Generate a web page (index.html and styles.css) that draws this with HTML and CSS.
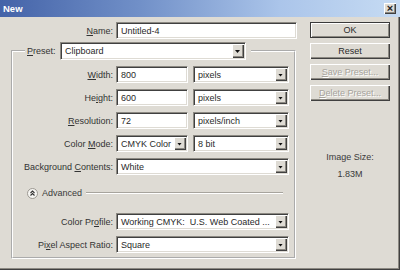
FILE: index.html
```html
<!DOCTYPE html>
<html>
<head>
<meta charset="utf-8">
<title>New</title>
<link rel="stylesheet" href="styles.css">
</head>
<body>
<div class="window">
  <div class="titlebar">
    <span class="title">New</span>
    <span class="close">&#215;</span>
  </div>
  <div class="content">
    <div class="main">
      <div class="row name-row">
        <span class="lbl lbl-name"><u>N</u>ame:</span>
        <div class="field name-field"><span class="val">Untitled-4</span></div>
      </div>
      <fieldset class="group">
        <legend class="legend">
          <span class="legend-lbl"><u>P</u>reset:</span>
          <div class="field select preset"><span class="val">Clipboard</span><span class="arrow"></span></div>
        </legend>
        <div class="row first">
          <span class="lbl"><u>W</u>idth:</span>
          <div class="field num"><span class="val">800</span></div>
          <div class="field select unit"><span class="val">pixels</span><span class="arrow"></span></div>
        </div>
        <div class="row">
          <span class="lbl">He<u>i</u>ght:</span>
          <div class="field num"><span class="val">600</span></div>
          <div class="field select unit"><span class="val">pixels</span><span class="arrow"></span></div>
        </div>
        <div class="row">
          <span class="lbl"><u>R</u>esolution:</span>
          <div class="field num"><span class="val">72</span></div>
          <div class="field select unit"><span class="val">pixels/inch</span><span class="arrow"></span></div>
        </div>
        <div class="row">
          <span class="lbl">Color <u>M</u>ode:</span>
          <div class="field select num"><span class="val">CMYK Color</span><span class="arrow"></span></div>
          <div class="field select unit"><span class="val">8 bit</span><span class="arrow"></span></div>
        </div>
        <div class="row">
          <span class="lbl">Background <u>C</u>ontents:</span>
          <div class="field select wide"><span class="val">White</span><span class="arrow"></span></div>
        </div>
        <div class="adv-row">
          <svg class="adv-icon" width="11" height="11" viewBox="0 0 11 11">
            <circle cx="5.5" cy="5.5" r="5" fill="#f6f5f2" stroke="#9c9992" stroke-width="1"/>
            <polyline points="3.5,5 5.5,3 7.5,5" fill="none" stroke="#333" stroke-width="1.1"/>
            <polyline points="3.5,7.5 5.5,5.5 7.5,7.5" fill="none" stroke="#333" stroke-width="1.1"/>
          </svg>
          <span class="adv-text">Advanced</span>
          <span class="adv-line"></span>
        </div>
        <div class="row profile">
          <span class="lbl">Color Pr<u>o</u>file:</span>
          <div class="field select wide"><span class="val">Working CMYK:  U.S. Web Coated ...</span><span class="arrow"></span></div>
        </div>
        <div class="row">
          <span class="lbl">Pi<u>x</u>el Aspect Ratio:</span>
          <div class="field select wide"><span class="val">Square</span><span class="arrow"></span></div>
        </div>
      </fieldset>
    </div>
    <div class="side">
      <div class="btn default">OK</div>
      <div class="btn">Reset</div>
      <div class="btn disabled"><u>S</u>ave Preset...</div>
      <div class="btn disabled"><u>D</u>elete Preset...</div>
      <div class="imgsize">
        <div class="imgsize-lbl">Image Size:</div>
        <div class="imgsize-val">1.83M</div>
      </div>
    </div>
  </div>
</div>
</body>
</html>
```

FILE: styles.css
```css
html, body {
  margin: 0;
  padding: 0;
}
body {
  width: 400px;
  height: 270px;
  overflow: hidden;
  background: #dedbd4;
  font-family: "Liberation Sans", Arial, sans-serif;
  font-size: 9px;
  color: #2e2e2e;
}
.window {
  width: 400px;
  height: 270px;
  box-sizing: border-box;
  box-shadow: inset -1px -1px #404040, inset -2px -2px #8c8982;
}
.titlebar {
  height: 17px;
  display: flex;
  align-items: center;
  justify-content: space-between;
  padding: 0 4px 0 3px;
  background: linear-gradient(to right, #4463a8 0%, #7190c8 35%, #abc5ea 70%, #c6dbf3 100%);
}
.title {
  color: #fff;
  font-weight: bold;
  font-size: 9.5px;
}
.close {
  width: 12px;
  height: 11px;
  box-sizing: border-box;
  background: #dedbd4;
  box-shadow: inset 1px 1px #fff, inset -1px -1px #404040, inset -2px -2px #8c8982;
  font-size: 11px;
  line-height: 10px;
  text-align: center;
  color: #222;
  font-weight: bold;
}
.content {
  display: flex;
  padding-top: 5px;
}
.main {
  width: 300px;
}
.row {
  display: flex;
  align-items: center;
  height: 17px;
  margin-top: 6px;
}
.name-row {
  margin-top: 0;
}
.lbl {
  box-sizing: border-box;
  padding-right: 3px;
  text-align: right;
  white-space: nowrap;
  flex: none;
  width: 103px;
  color: #333;
}
.lbl-name {
  width: 116px;
}
.field {
  height: 17px;
  box-sizing: border-box;
  background: #fff;
  border: 1px solid;
  border-color: #8c8982 #fff #fff #8c8982;
  box-shadow: inset 1px 1px #404040, inset -1px -1px #dedbd4;
  display: flex;
  align-items: center;
  flex: none;
  color: #2a2a2a;
}
.val {
  flex: 1;
  padding-left: 4px;
  white-space: pre;
  overflow: hidden;
}
.name-field {
  width: 181px;
}
.num {
  width: 72px;
}
.unit {
  width: 96px;
  margin-left: 5px;
}
.wide {
  width: 173px;
}
.arrow {
  width: 12px;
  height: 13px;
  margin: 1px 1px 1px 0;
  box-sizing: border-box;
  background: #dedbd4;
  box-shadow: inset 1px 1px #fff, inset -1px -1px #404040, inset -2px -2px #8c8982;
  display: flex;
  align-items: center;
  justify-content: center;
  flex: none;
}
.arrow::after {
  content: "";
  width: 5px;
  height: 3px;
  margin-top: 1px;
  margin-left: -1px;
  background: #111;
  clip-path: polygon(0 0, 100% 0, 50% 100%);
}
.group {
  margin: 3px 0 0 11px;
  width: 285px;
  box-sizing: border-box;
  border: 2px groove #fff;
  padding: 0 0 4px 0;
  min-width: 0;
}
.legend {
  display: flex;
  align-items: center;
  margin-left: 12px;
  padding: 0 5px 0 2px;
  height: 18px;
}
.legend-lbl {
  width: 33px;
  white-space: nowrap;
  color: #333;
}
.preset {
  width: 186px;
  height: 18px;
}
.preset .arrow {
  height: 14px;
}
.first {
  margin-top: 6px;
}
.adv-row {
  display: flex;
  align-items: center;
  height: 12px;
  margin-top: 12px;
  padding-left: 14px;
}
.adv-icon {
  flex: none;
  display: block;
}
.adv-text {
  margin-left: 4px;
  color: #3a3a3a;
}
.adv-line {
  flex: 1;
  height: 0;
  border-top: 1px solid #a7a49d;
  border-bottom: 1px solid #fff;
  margin-left: 4px;
  margin-right: 11px;
}
.profile {
  margin-top: 14px;
}
.side {
  margin-left: 10px;
  width: 80px;
  display: flex;
  flex-direction: column;
}
.btn {
  height: 16px;
  box-sizing: border-box;
  margin-bottom: 5px;
  display: flex;
  align-items: center;
  justify-content: center;
  background: #dedbd4;
  box-shadow: inset 1px 1px #fff, inset -1px -1px #404040, inset -2px -2px #8c8982;
  color: #2a2a2a;
}
.btn.default {
  border: 1px solid #3a3a3a;
  box-shadow: inset 1px 1px #fff, inset -1px -1px #8c8982;
}
.btn.disabled {
  color: #a6a39c;
  text-shadow: 1px 1px #fff;
}
.imgsize {
  margin-top: 46px;
  text-align: center;
  color: #3a3a3a;
}
.imgsize-val {
  margin-top: 7px;
}
```
